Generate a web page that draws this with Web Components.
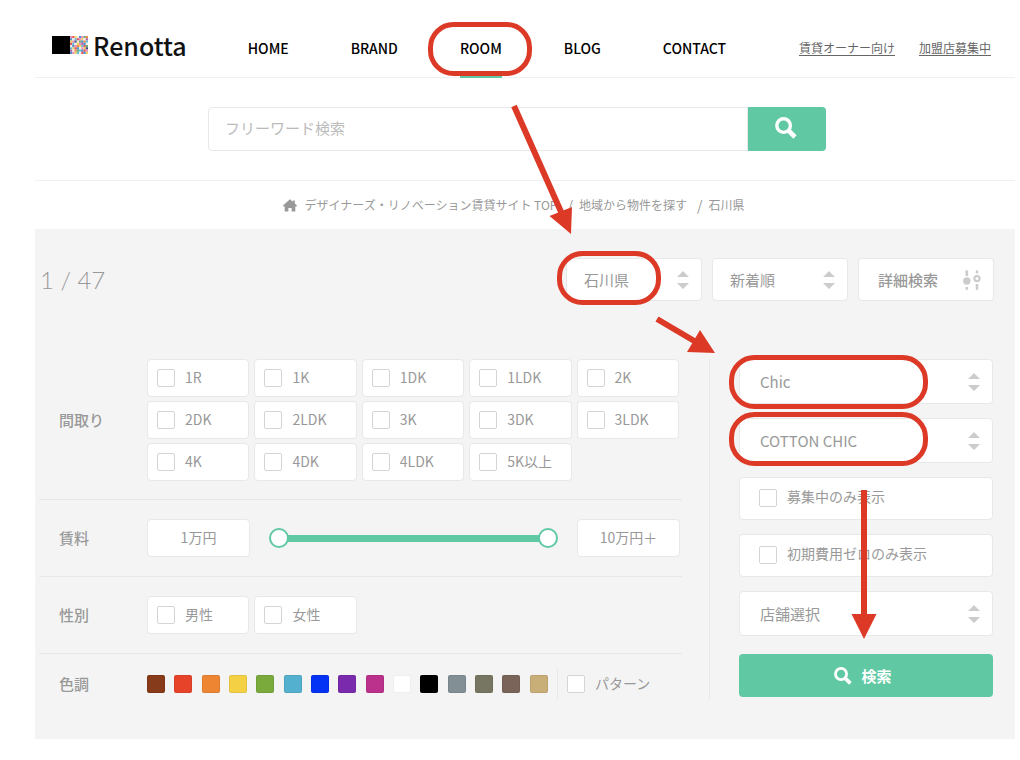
<!DOCTYPE html>
<html lang="ja">
<head>
<meta charset="utf-8">
<meta name="viewport" content="width=device-width, initial-scale=1">
<title>Renotta</title>
<style>
  body {
    margin: 0;
    background: #fff;
    color: #999;
    font-family: "Noto Sans CJK JP", "Noto Sans", sans-serif;
    font-size: 15px;
    line-height: 20px;
    --line: #e8e8e8;
    --panel: #f4f4f4;
    --accent: #60c9a4;
    --mark: #dc3a26;
  }
</style>
</head>
<body>
<renotta-page></renotta-page>

<script>
const register = (name, html, setup) => {
  const template = document.createElement('template');
  template.innerHTML = '<style>*{box-sizing:border-box}input,select,button{font:inherit;color:inherit;margin:0}</style>' + html;
  customElements.define(name, class extends HTMLElement {
    connectedCallback() {
      if (this.shadowRoot) return;
      this.attachShadow({ mode: 'open' }).append(template.content.cloneNode(true));
      if (setup) setup(this, this.shadowRoot);
    }
  });
};

register('search-icon', `
  <style>:host{display:block;width:18px;height:18px}svg{display:block;width:100%;height:100%}</style>
  <svg viewBox="0 0 22 22" fill="none" stroke="currentColor" aria-hidden="true">
    <circle cx="8.6" cy="8.6" r="6.8" stroke-width="3.4"/>
    <path d="M13.6 13.6L20 20" stroke-width="4.6"/>
  </svg>`);

register('site-logo', `
  <style>
    :host{display:block}
    a{display:flex;align-items:center;gap:5px;color:#111;text-decoration:none;font-size:25px;font-weight:500;line-height:30px}
    svg{width:36px;height:18px;flex:none}
  </style>
  <a href="#home"><svg viewBox="0 0 36 18" aria-hidden="true"><path d="M0 0h18v18H0z"/><g></g></svg><span>Renotta</span></a>`,
  (host, root) => {
    const rows = ['prywbpgo', 'bwcrpywm', 'yptwgboc', 'rcwypmbw', 'wbpoycrg', 'cyrbwpyt', 'mwogcbrp', 'bpycwrby'];
    const colors = { p: '#ef8fb4', r: '#e2565c', y: '#f3cf62', w: '#f6efe6', b: '#4a8fd0', g: '#6fae7a', o: '#f08a4a', c: '#63c0d8', m: '#b565a6', t: '#3d4f86' };
    root.querySelector('g').innerHTML = rows.map((row, y) => [...row].map((key, x) =>
      `<rect x="${18 + x * 2.25}" y="${y * 2.25}" width="2.3" height="2.3" fill="${colors[key]}"/>`).join('')).join('');
  });

register('site-header', `
  <style>
    :host{display:flex;height:78px;padding:18px 24px 0 17px;border-bottom:1px solid #f0f0f0}
    site-logo{align-self:center;padding-bottom:6px}
    nav{display:flex;gap:62px;margin:0 0 -1px 61px}
    nav a{display:flex;align-items:center;color:#000;text-decoration:none;font-weight:500;font-size:14px;border:solid transparent;border-width:2px 0 3px}
    nav a[aria-current]{border-bottom-color:var(--accent)}
    .sub{display:flex;align-items:center;gap:24px;margin-left:auto;font-size:12px;white-space:nowrap}
    .sub a{color:#666;text-underline-offset:2px}
  </style>
  <site-logo></site-logo>
  <nav>
    <a href="#home">HOME</a><a href="#brand">BRAND</a><a href="#room" aria-current="page">ROOM</a><a href="#blog">BLOG</a><a href="#contact">CONTACT</a>
  </nav>
  <div class="sub"><a href="#owner">賃貸オーナー向け</a><a href="#join">加盟店募集中</a></div>`);

register('keyword-search', `
  <style>
    :host{display:block;padding:29px 16px 29px 0;border-bottom:1px solid #f0f0f0}
    form{display:flex;max-width:618px;height:44px;margin:0 auto}
    input{flex:1;min-width:0;padding:0 16px 2px;border:1px solid var(--line);border-radius:4px 0 0 4px;background:#fff;outline:0}
    input::placeholder{color:#bbb;opacity:1}
    button{display:grid;place-items:center;width:78px;padding:0 2px 2px 0;border:0;border-radius:0 4px 4px 0;background:var(--accent);color:#fff}
    search-icon{width:22px;height:22px}
  </style>
  <form role="search"><input type="search" aria-label="フリーワード検索" placeholder="フリーワード検索"><button type="button" aria-label="検索"><search-icon></search-icon></button></form>`);

register('bread-crumbs', `
  <style>
    :host{display:block;padding:14px 22px 14px 0}
    ol{display:flex;justify-content:center;align-items:center;margin:0;padding:0;list-style:none;font-size:12px}
    li{display:flex;align-items:center}
    li+li::before{content:"/";margin:0 6px 0 10px;font-size:14px}
    a{display:flex;align-items:center;gap:7px;color:inherit;text-decoration:none}
    svg{width:14px;height:13px}
  </style>
  <ol>
    <li><a href="#top"><svg viewBox="0 0 14 13" fill="#999" aria-hidden="true"><path d="M7 0.3L9.800 2.800V1.600h2v3L14 6.600l-.7.8h-1V12q0 .6-.6.6H8.600V9H5.400v3.600H2.300q-.6 0-.6-.6V7.400h-1L0 6.600z"/></svg>デザイナーズ・リノベーション賃貸サイト TOP</a></li>
    <li><a href="#area">地域から物件を探す</a></li>
    <li><span aria-current="page">石川県</span></li>
  </ol>`);

register('select-box', `
  <style>
    :host{display:block;height:45px}
    label{display:grid;grid-template-columns:1fr;align-items:center;height:100%;background:#fff;border:1px solid var(--line);border-radius:4px}
    select,svg{grid-area:1/1}
    select{appearance:none;width:100%;height:100%;padding:0 40px 0 var(--inset,20px);border:0;border-radius:4px;background:none;outline:0}
    svg{justify-self:end;width:12px;height:18px;margin-right:12px;pointer-events:none}
  </style>
  <label><select></select><svg viewBox="0 0 12 18" fill="#ccc" aria-hidden="true"><path d="M6 0l6 6H0zM0 12h12l-6 6z"/></svg></label>`,
  (host, root) => {
    const select = root.querySelector('select');
    select.setAttribute('aria-label', host.getAttribute('label'));
    select.add(new Option(host.getAttribute('value')));
  });

register('check-tile', `
  <style>
    :host{display:block;height:38px;font-size:14px}
    label{display:flex;align-items:center;gap:10px;height:100%;padding:0 0 1px 9px;background:#fff;border:1px solid var(--line);border-radius:4px;white-space:nowrap}
    input{appearance:none;flex:none;width:18px;height:18px;background:#fff;border:1px solid #d4d4d4;border-radius:2px}
    input:checked{background:var(--accent)}
    span{padding-bottom:2px}
    :host([wide]){height:43px}
    :host([wide]) label{padding-left:19px}
    :host([wide]) span{padding-bottom:4px}
    :host([plain]) label{padding:0;border:0;background:none}
  </style>
  <label><input type="checkbox"><span><slot></slot></span></label>`);

register('filter-row', `
  <style>
    :host{display:grid;grid-template-columns:88px minmax(0,1fr);align-items:center;padding:19px 3px 19px 20px;border-bottom:1px solid var(--line)}
    :host(:first-of-type){padding-top:0;padding-bottom:18px}
    :host(:last-of-type){border:0;padding-top:15px;padding-bottom:0}
    .name{font-weight:500}
  </style>
  <div class="name"></div><slot></slot>`,
  (host, root) => { root.querySelector('.name').textContent = host.getAttribute('name'); });

register('tile-grid', `
  <style>:host{display:grid;grid-template-columns:repeat(5,minmax(0,1fr));gap:4px 5px}</style><slot></slot>`);

register('price-range', `
  <style>
    :host{display:flex;align-items:center;gap:19px;margin-right:-1px;font-size:14px}
    output{flex:none;width:103px;height:38px;padding-bottom:2px;display:grid;place-items:center;background:#fff;border:1px solid var(--line);border-radius:4px}
    .slider{flex:1;display:grid;align-items:center;background:linear-gradient(var(--accent),var(--accent)) center/calc(100% - 20px) 7px no-repeat}
    input{grid-area:1/1;appearance:none;width:100%;height:20px;background:none;pointer-events:none}
    input::-webkit-slider-thumb{appearance:none;width:20px;height:20px;border:2px solid var(--accent);border-radius:50%;background:#fff;pointer-events:auto}
  </style>
  <output>1万円</output>
  <div class="slider">
    <input type="range" min="1" max="10" value="1" aria-label="賃料 下限">
    <input type="range" min="1" max="10" value="10" aria-label="賃料 上限">
  </div>
  <output>10万円＋</output>`);

register('color-picker', `
  <style>
    :host{display:flex;align-items:center}
    .swatches{flex:none;display:flex;justify-content:space-between;width:401px}
    input{appearance:none;width:18px;height:18px;border:1px solid #0001;border-radius:2px}
    check-tile{margin-left:9px;padding-left:9px;height:30px;border-left:1px solid var(--line)}
  </style>
  <div class="swatches"></div><check-tile plain>パターン</check-tile>`,
  (host, root) => {
    const box = root.querySelector('.swatches');
    const colors = { 茶: '#863b1a', 赤: '#e7432b', 橙: '#ed8533', 黄: '#f4d045', 緑: '#7aaa3c', 水色: '#53b0cf', 青: '#0433f5', 紫: '#7a2aac', 桃: '#bb328d', 白: '#fff', 黒: '#000', 灰: '#828f95', 灰緑: '#767663', 灰茶: '#7a645a', 金: '#c8ae77' };
    for (const [name, color] of Object.entries(colors)) {
      const input = document.createElement('input');
      input.type = 'checkbox';
      input.ariaLabel = name;
      input.style.background = color;
      box.append(input);
    }
  });

register('search-panel', `
  <style>
    :host{display:block;padding:29px 22px 40px 4px;background:var(--panel)}
    .bar{display:flex;align-items:center;gap:10px;margin:0 -1px 58px 0}
    .count{flex:1;padding-left:1px;font:300 24px/30px Lato,sans-serif}
    .bar select-box,.detail{width:136px;height:43px}
    .bar select-box{--inset:17px}
    .detail{display:flex;align-items:center;justify-content:space-between;padding:0 11px 0 19px;border:1px solid var(--line);border-radius:4px;background:#fff;font-weight:500}
    .detail svg{width:20px;height:20px}
    .body{display:grid;grid-template-columns:minmax(0,1fr) 284px;gap:27px}
    .side{display:grid;align-content:start;gap:14px;padding-left:29px;border-left:1px solid var(--line)}
    .go{display:flex;align-items:center;justify-content:center;gap:9px;height:43px;margin-top:4px;padding:0 12px 0 6px;border:0;border-radius:4px;background:var(--accent);color:#fff;font-weight:700}
  </style>
  <div class="bar">
    <div class="count">1 / 47</div>
    <select-box label="都道府県" value="石川県"></select-box>
    <select-box label="並び順" value="新着順"></select-box>
    <button class="detail" type="button">詳細検索<svg viewBox="0 0 20 20" fill="#ccc" aria-hidden="true"><path d="M3.500 1.500q0-1.500 1.300-1.500t1.300 1.500V6H3.500zM3.500 17h2.600v1.500q0 1.500-1.300 1.500t-1.300-1.500zM13.700 1.500q0-1.500 1.300-1.500t1.300 1.500V3.500h-2.600zM13.700 14h2.600v4.500q0 1.500-1.300 1.500t-1.300-1.500z"/><circle cx="4.800" cy="11" r="3.700"/><circle cx="15" cy="8.600" r="2.600" fill="none" stroke="#ccc" stroke-width="2.200"/></svg></button>
  </div>
  <div class="body">
    <div>
      <filter-row name="間取り"><tile-grid>
        <check-tile>1R</check-tile><check-tile>1K</check-tile><check-tile>1DK</check-tile><check-tile>1LDK</check-tile><check-tile>2K</check-tile>
        <check-tile>2DK</check-tile><check-tile>2LDK</check-tile><check-tile>3K</check-tile><check-tile>3DK</check-tile><check-tile>3LDK</check-tile>
        <check-tile>4K</check-tile><check-tile>4DK</check-tile><check-tile>4LDK</check-tile><check-tile>5K以上</check-tile>
      </tile-grid></filter-row>
      <filter-row name="賃料"><price-range></price-range></filter-row>
      <filter-row name="性別"><tile-grid><check-tile>男性</check-tile><check-tile>女性</check-tile></tile-grid></filter-row>
      <filter-row name="色調"><color-picker></color-picker></filter-row>
    </div>
    <div class="side">
      <select-box label="テイスト" value="Chic"></select-box>
      <select-box label="ブランド" value="COTTON CHIC"></select-box>
      <check-tile wide>募集中のみ表示</check-tile>
      <check-tile wide>初期費用ゼロのみ表示</check-tile>
      <select-box label="店舗" value="店舗選択"></select-box>
      <button class="go" type="button"><search-icon></search-icon>検索</button>
    </div>
  </div>`);

/* Red rings and arrows that walk the reader through the search steps. */
register('guide-marks', `
  <style>:host{position:absolute;top:0;left:0;pointer-events:none}svg{display:block}</style>
  <svg width="1020" height="760" viewBox="0 0 1020 760" fill="none" stroke="var(--mark)" aria-hidden="true">
    <g stroke-width="5">
      <rect x="430.500" y="24.500" width="99" height="49" rx="23"/>
      <rect x="559.500" y="253.500" width="99" height="49" rx="23"/>
      <rect x="731.500" y="357.500" width="194" height="49" rx="23"/>
      <rect x="731.500" y="414.500" width="194" height="49" rx="23"/>
    </g>
    <path stroke-width="6" d="M514 106L562 214M657 319L696 342M864 490V616"/>
    <path stroke="none" fill="var(--mark)" d="M571 234L549.500 216L572 207zM715 353L687 352L700 330zM864 639L851.500 614H876.500z"/>
  </svg>`);

register('renotta-page', `
  <style>:host{display:block;position:relative;padding:0 5px 21px 35px}</style>
  <site-header></site-header>
  <main>
    <keyword-search></keyword-search>
    <bread-crumbs></bread-crumbs>
    <search-panel></search-panel>
  </main>
  <guide-marks></guide-marks>`);
</script>
</body>
</html>
